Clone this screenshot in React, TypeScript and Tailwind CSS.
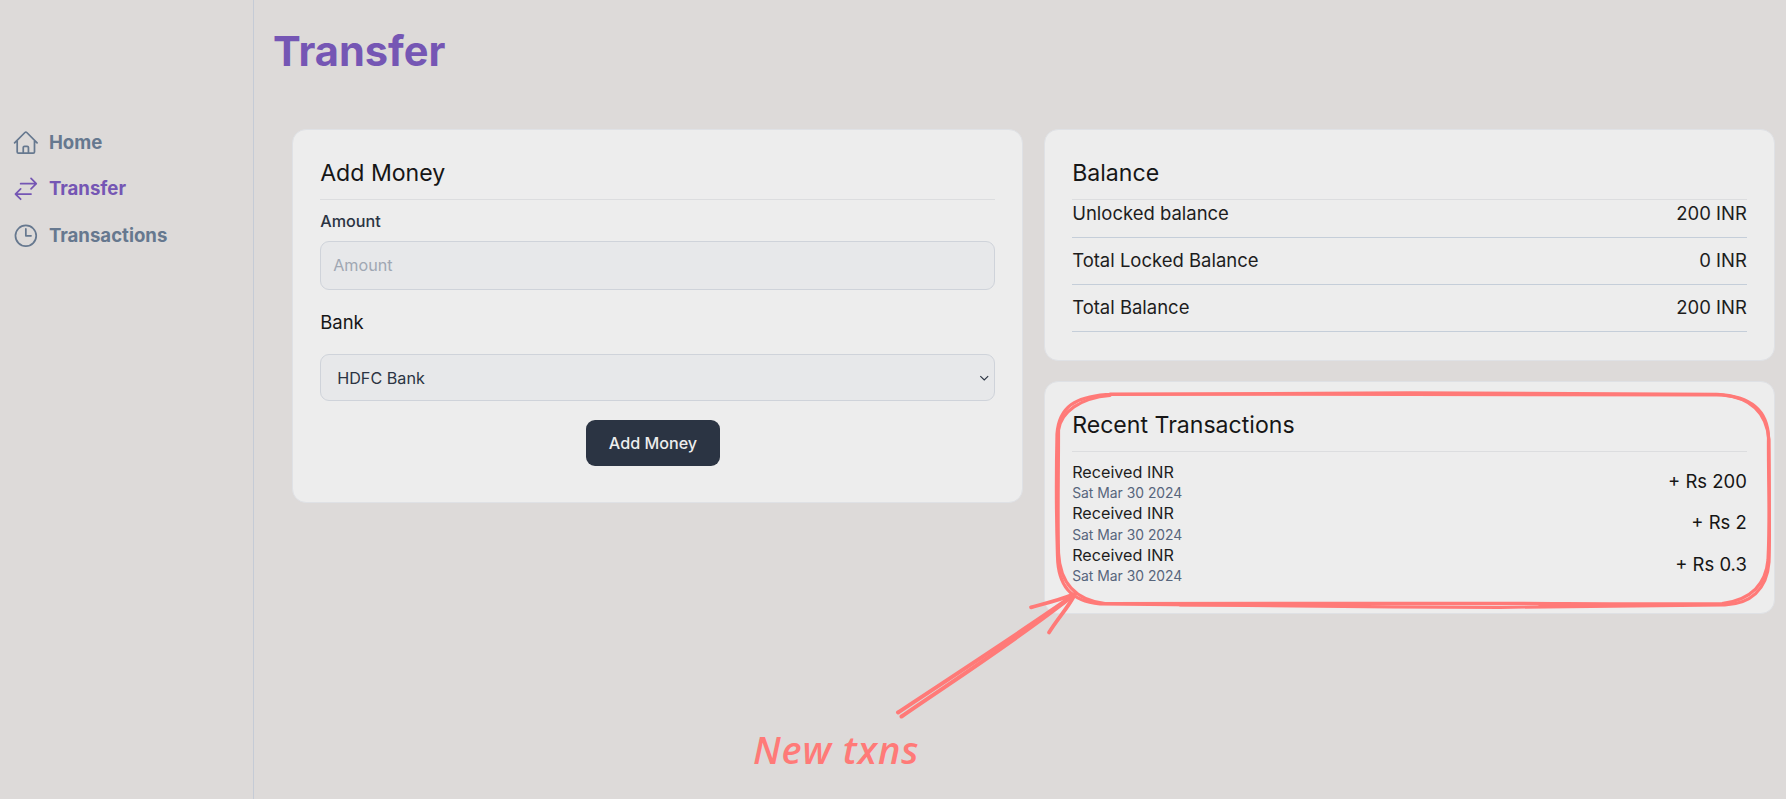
import React from "react";

const FONT = "font-['Inter',sans-serif]";

const icons = {
  home: "m2.25 12 8.954-8.955c.44-.439 1.152-.439 1.591 0L21.75 12M4.5 9.75v10.125c0 .621.504 1.125 1.125 1.125H9.75v-4.875c0-.621.504-1.125 1.125-1.125h2.25c.621 0 1.125.504 1.125 1.125V21h4.125c.621 0 1.125-.504 1.125-1.125V9.75M8.25 21h8.25",
  transfer:
    "M7.5 21 3 16.5m0 0L7.5 12M3 16.5h13.5m0-13.5L21 7.5m0 0L16.5 12M21 7.5H7.5",
  clock: "M12 6v6h4.5m4.5 0a9 9 0 1 1-18 0 9 9 0 0 1 18 0Z",
};

function NavItem({ label, path, active }: { label: string; path: string; active?: boolean }) {
  return (
    <a
      className={
        "flex h-[46.2px] items-center pl-[12px] " +
        (active ? "text-[#7556b4]" : "text-[#66788f]")
      }
    >
      <svg
        className="size-[27.7px] shrink-0"
        viewBox="0 0 24 24"
        fill="none"
        stroke="currentColor"
        strokeWidth={1.5}
        strokeLinecap="round"
        strokeLinejoin="round"
      >
        <path d={path} />
      </svg>
      <span className="pl-[9.2px] text-[18.6px] leading-[27.7px] font-bold">{label}</span>
    </a>
  );
}

function Card({ title, children, className = "" }: { title: string; children: React.ReactNode; className?: string }) {
  return (
    <section className={"rounded-[14px] border border-[#dfe1e5] bg-[#ededed] p-[27.2px] " + className}>
      <h2 className="border-b border-[#dcdddf] pb-[9.2px] text-[23.1px] leading-[32.3px] text-[#161616]">
        {title}
      </h2>
      {children}
    </section>
  );
}

const balances = [
  ["Unlocked balance", "200 INR"],
  ["Total Locked Balance", "0 INR"],
  ["Total Balance", "200 INR"],
];

const transactions = ["200", "2", "0.3"];

function Annotation() {
  return (
    <div className="pointer-events-none absolute inset-0 text-[#ff7a78]">
      <svg
        className="absolute inset-0"
        width="1786"
        height="799"
        viewBox="0 0 1786 799"
        fill="none"
        stroke="currentColor"
        strokeWidth={3.2}
        strokeLinecap="round"
        strokeLinejoin="round"
      >
        <path d="M1106 394.5C1250 393 1330 393 1410 392.8C1540 392.8 1640 394 1717 394.3C1750 396 1768 410 1768.5 438C1768 480 1770.500 520 1769 562C1767 590 1750 604 1725 604.8C1640 606 1560 607.300 1500 607.300C1370 607.300 1260 605.500 1100 604C1070 601 1058 585 1057.500 556C1056 510 1056 480 1057 434C1059 406 1076 397 1106 394.500" />
        <path d="M1110 394C1250 394.800 1330 394.300 1410 394.300C1540 394 1640 394.500 1722 395C1755 398 1767 416 1769 440C1769.500 490 1769.500 530 1768 560C1766 583 1752 600 1722 603.500C1640 604.500 1560 603.300 1480 603.300C1370 603.500 1240 602.800 1105 603.500C1075 600 1060 582 1058.500 553C1057.500 510 1058.500 480 1058.500 430C1061 412 1080 398 1110 395.500" />
        <path d="M1540 605.200H1600M1180 604.800H1330" />
        <path strokeWidth={4} d="M898 712.500C950 678 1015 636 1074 595" />
        <path strokeWidth={4} d="M901.500 716.500C950 683 1020 638 1075 594" />
        <path strokeWidth={3.8} d="M1031 607.300C1045 603.500 1060 600 1073 594.500" />
        <path strokeWidth={3.8} d="M1049 632.500C1058 618 1067 609 1074 596" />
      </svg>
      <span className="absolute top-[726px] left-[753px] font-['Open_Sans','Noto_Sans',sans-serif] text-[38px] leading-[46px] font-semibold tracking-[0.9px] whitespace-nowrap italic">
        New txns
      </span>
    </div>
  );
}

export default function App() {
  return (
    <div className={"relative flex h-[799px] w-[1786px] overflow-hidden bg-[#dddad9] " + FONT}>
      <nav className="w-[254px] shrink-0 border-r border-[#c5cbd6] pt-[120px]">
        <NavItem label="Home" path={icons.home} />
        <NavItem label="Transfer" path={icons.transfer} active />
        <NavItem label="Transactions" path={icons.clock} />
      </nav>
      <main className="flex-1 pr-[11px] pl-[19px]">
        <h1 className="mt-[28px] text-[41.6px] leading-[46px] font-bold text-[#7556b4]">Transfer</h1>
        <div className="mt-[55px] ml-[19px] grid grid-cols-2 items-start gap-[21px]">
          <Card title="Add Money" className="h-[374px]">
            <label className="mt-[10px] block text-[16.17px] leading-[23px] font-medium text-[#2b3443]">Amount</label>
            <input
              className="mt-[8.500px] block h-[48.500px] w-full rounded-[9px] border border-[#cfd3da] bg-[#e7e8ea] px-[12px] text-[16.17px] placeholder:text-[#a0a7b3]"
              placeholder="Amount"
            />
            <div className="mt-[19px] text-[18.48px] leading-[27.7px] text-[#161616]">Bank</div>
            <div className="mt-[18px] flex h-[47px] items-center justify-between rounded-[9px] border border-[#cfd3da] bg-[#e7e8ea] pr-[4px] pl-[16px] text-[16.17px] text-[#2b3443]">
              <span>HDFC Bank</span>
              <svg className="size-[10.500px]" viewBox="0 0 12 12" fill="none" stroke="currentColor" strokeWidth={1.3}>
                <path d="M1.500 3.500 6 8l4.500-4.500" />
              </svg>
            </div>
            <div className="mt-[18.500px] flex justify-center pr-[9px]">
              <button className="h-[46px] w-[134.500px] rounded-[9px] bg-[#2b3443] text-[16.17px] font-medium text-[#ededed]">
                Add Money
              </button>
            </div>
          </Card>
          <div className="flex flex-col gap-[20px]">
            <Card title="Balance" className="h-[232px]">
              <div className="flex flex-col gap-[9.2px] pt-[0.4px]">
                {balances.map(([name, value]) => (
                  <div
                    key={name}
                    className="flex justify-between border-b border-[#c5ced9] pb-[9.2px] text-[18.48px] leading-[27.7px] text-[#1d1d1d]"
                  >
                    <span>{name}</span>
                    <span>{value}</span>
                  </div>
                ))}
              </div>
            </Card>
            <Card title="Recent Transactions" className="h-[233px]">
              <div className="pt-[9.2px]">
                {transactions.map((amount) => (
                  <div key={amount} className="flex h-[41.6px] items-center justify-between">
                    <div>
                      <div className="text-[16.17px] leading-[23.1px] text-[#1d1d1d]">Received INR</div>
                      <div className="text-[13.86px] leading-[18.5px] text-[#57657c]">Sat Mar 30 2024</div>
                    </div>
                    <div className="text-[18.48px] leading-[27.7px] text-[#161616]">+ Rs {amount}</div>
                  </div>
                ))}
              </div>
            </Card>
          </div>
        </div>
      </main>
      <Annotation />
    </div>
  );
}
